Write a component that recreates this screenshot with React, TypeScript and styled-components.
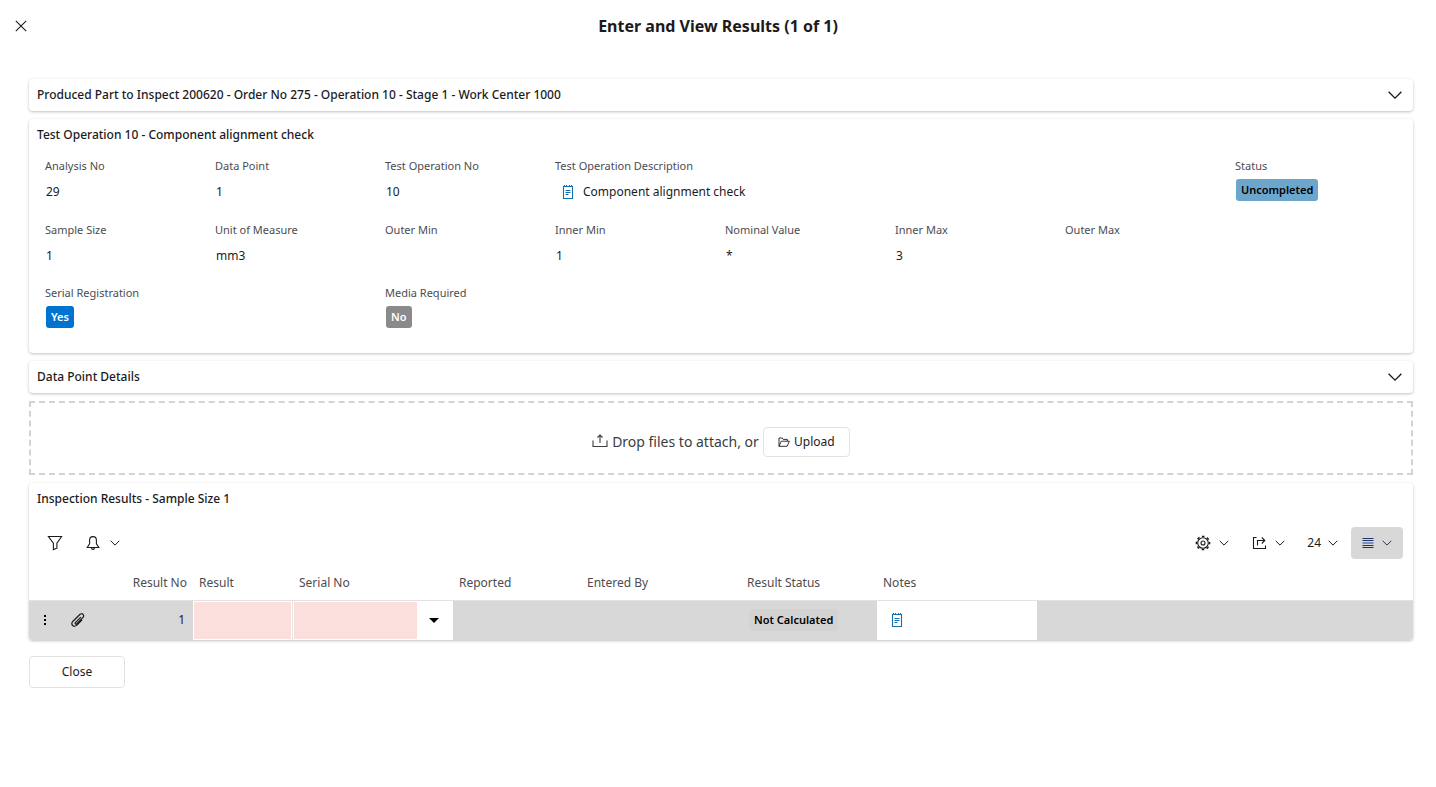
import React from 'react';
import styled, { createGlobalStyle } from 'styled-components';

const GlobalStyle = createGlobalStyle`
  *, *::before, *::after { box-sizing: border-box; }
  body {
    margin: 0;
    background: #fff;
    color: #1b1b1d;
    font-family: "Noto Sans", "Open Sans", sans-serif;
    font-size: 12px;
    line-height: 16px;
  }
  button, input { font: inherit; color: inherit; }
`;

/* ---------- icons ---------- */

const Svg = styled.svg`
  display: block;
  flex: none;
  fill: none;
  stroke: currentColor;
`;

const CloseIcon = () => (
  <Svg width="12" height="12" viewBox="0 0 12 12" strokeWidth="1.1">
    <path d="M.8.8l10.4 10.4M11.2.8L.8 11.2" />
  </Svg>
);

const ChevronIcon = ({ large = false }: { large?: boolean }) =>
  large ? (
    <Svg width="14" height="8" viewBox="0 0 14 8" strokeWidth="1.3">
      <path d="M.6.8L7 7.1 13.4.8" />
    </Svg>
  ) : (
    <Svg width="10" height="6" viewBox="0 0 10 6" strokeWidth="1">
      <path d="M.7.8L5 5.1 9.3.8" />
    </Svg>
  );

const FilterIcon = () => (
  <Svg width="16" height="16" viewBox="0 0 16 16" strokeWidth="1.1">
    <path d="M1.4 1.5h13.2L9.9 8.2v5L6.4 14.6V8.2z" />
  </Svg>
);

const BellIcon = () => (
  <Svg width="14" height="16" viewBox="0 0 14 16" strokeWidth="1.1">
    <path d="M1.2 12.5L3.600 8.800V5.200C3.600 3 5 1.600 7 1.600S10.400 3 10.400 5.200v3.600l2.400 3.700z" />
    <path d="M5.400 12.600c.1 1.200.7 1.800 1.600 1.800s1.500-.6 1.600-1.800" />
  </Svg>
);

const GearIcon = () => (
  <Svg width="16" height="16" viewBox="0 0 16 16" strokeWidth="1.1">
    <circle cx="8" cy="8" r="5.3" />
    <circle cx="8" cy="8" r="6.6" strokeWidth="1.5" strokeDasharray="2.6 2.584" strokeDashoffset="1.3" />
    <circle cx="8" cy="8" r="2" />
  </Svg>
);

const ExportIcon = () => (
  <Svg width="16" height="14" viewBox="0 0 16 14" strokeWidth="1.1">
    <path d="M5.500 1.500h-3v11h12V9.500" />
    <path d="M6.500 9.500v-5h7.200M10.800 1.500l3 3-3 3" />
  </Svg>
);

const ListIcon = () => (
  <Svg width="12" height="12" viewBox="0 0 12 12" strokeWidth="1">
    <path d="M.5 1.500h11M.5 3.500h11M.5 8.500h11M.5 10.500h11" />
    <path d="M.5 6h11" strokeWidth="2" stroke="#7d8fc0" />
  </Svg>
);

const BlueSvg = styled(Svg)`
  stroke: #1470ac;
`;

const NoteIcon = () => (
  <BlueSvg width="12" height="16" viewBox="0 0 12 16" strokeWidth="1.1">
    <path d="M1.500 2.500h9v12h-9z" />
    <path d="M2.500 1v2M4.500 1v2M7.500 1v2M9.500 1v2" />
    <path d="M3.500 6.500h5M3.500 8.500h5M3.500 10.500h3" />
  </BlueSvg>
);

const UploadIcon = () => (
  <Svg width="16" height="16" viewBox="0 0 16 16" strokeWidth="1.1">
    <path d="M1 6.500v6h14v-6M8 9V1M5.500 3.500L8 1l2.500 2.500" />
  </Svg>
);

const FolderIcon = () => (
  <Svg width="12" height="12" viewBox="0 0 12 12" strokeWidth=".9">
    <path d="M1 10.300V2h3.300l1 1.400h4v1.800M1 10.300l2.300-5.100h8.100l-2.300 5.100z" />
  </Svg>
);

const ClipIcon = () => (
  <Svg width="16" height="16" viewBox="0 0 16 16" strokeWidth="1.2">
    <path d="M10.800 5.100L5.400 10.600c-.5.5-.4 1 0 1.300s.9.300 1.300-.1l6.200-6.300c1-1.100.9-2.400.1-3.200s-2.200-.8-3.200.2L3 9.200c-1.300 1.400-1.400 3.200-.3 4.300s2.900 1 4.200-.3l5.200-5.300" />
  </Svg>
);

const DotsIcon = () => (
  <Svg width="4" height="12" viewBox="0 0 4 12">
    <path d="M1 2h2M1 6h2M1 10h2" strokeWidth="2" stroke="#000" />
  </Svg>
);

const CaretIcon = () => (
  <Svg width="10" height="5" viewBox="0 0 10 5" strokeWidth="0">
    <path d="M0 0h10L5 5z" fill="#000" />
  </Svg>
);

/* ---------- page parts ---------- */

const Header = styled.header`
  display: grid;
  grid-template-columns: 42px 1fr 42px;
  align-items: center;
  height: 52px;
`;

const Title = styled.h1`
  margin: 0;
  text-align: center;
  font-size: 16px;
  line-height: 24px;
  font-weight: 700;
`;

const IconButton = styled.button`
  display: flex;
  align-items: center;
  justify-content: center;
  gap: 8px;
  padding: 0;
  border: 0;
  background: none;
  cursor: pointer;
`;

const CloseX = styled(IconButton)`
  height: 32px;
`;

const Main = styled.main`
  display: flex;
  flex-direction: column;
  gap: 8px;
  padding: 27px 23px 24px 29px;
`;

const Card = styled.section`
  border-radius: 4px;
  background: #fff;
  box-shadow: 0 1px 3px rgba(0, 0, 0, 0.25);
  overflow: hidden;
`;

const CardTitle = styled.h2`
  margin: 0;
  padding: 8px;
  font-size: 12px;
  line-height: 16px;
  font-weight: 500;
`;

const Expander = styled.button`
  display: flex;
  align-items: center;
  justify-content: space-between;
  width: 100%;
  height: 32px;
  padding: 0 11px 0 8px;
  border: 0;
  background: none;
  font-weight: 500;
  cursor: pointer;
`;

const Fields = styled.dl`
  display: grid;
  grid-template-columns: repeat(8, minmax(0, 1fr));
  grid-template-rows: 48px 47px 48px;
  row-gap: 16px;
  margin: 0;
  padding: 7px 8px 20px 16px;
`;

const Field = styled.div<{ $col: number; $span?: number }>`
  grid-column: ${(p) => p.$col} / span ${(p) => p.$span ?? 1};
`;

const Label = styled.dt`
  color: #4c4c50;
  font-size: 11px;
  line-height: 16px;
`;

const Value = styled.dd`
  display: flex;
  align-items: center;
  gap: 9px;
  height: 32px;
  margin: 0;
  padding: 4px 0 0 1px;
`;

const NoteValue = styled(Value)`
  padding-left: 7px;
`;

const BadgeValue = styled(Value)`
  padding-top: 0;
`;

const Badge = styled.span<{ $bg: string; $fg: string }>`
  padding: 3px 5px;
  border-radius: 3px;
  background: ${(p) => p.$bg};
  color: ${(p) => p.$fg};
  font-size: 11px;
  line-height: 16px;
  font-weight: 600;
`;

const DropZone = styled.section`
  display: flex;
  align-items: center;
  justify-content: center;
  gap: 4px;
  height: 74px;
  padding-top: 7px;
  border: 2px dashed #d3d3d3;
  color: #3c3c40;
  font-size: 14px;
  line-height: 20px;
`;

const OutlineButton = styled.button<{ $wide?: boolean }>`
  display: flex;
  align-items: center;
  justify-content: center;
  gap: 4px;
  width: ${(p) => (p.$wide ? '96px' : '87px')};
  height: ${(p) => (p.$wide ? '32px' : '30px')};
  padding: 0;
  border: 1px solid #e2e2e2;
  border-radius: 4px;
  background: #fff;
  color: #1b1b1d;
  font-size: 12px;
  line-height: 16px;
  cursor: pointer;
`;

const Toolbar = styled.div`
  display: flex;
  align-items: center;
  gap: 23px;
  height: 32px;
  margin-top: 12px;
  padding: 0 10px 0 18px;
`;

const ToolGroup = styled.div`
  display: flex;
  align-items: center;
  gap: 22px;
  margin-left: auto;
`;

const ToolButton = styled(IconButton)<{ $gap?: number }>`
  height: 32px;
  gap: ${(p) => p.$gap ?? 8}px;
`;

const ActiveTool = styled(ToolButton)`
  width: 52px;
  margin-left: -9px;
  border-radius: 4px;
  background: #d8d8d8;
  color: #1f3864;
`;

const Table = styled.table`
  width: 100%;
  margin-top: 6px;
  border-collapse: collapse;
  table-layout: fixed;
`;

const Th = styled.th<{ $right?: boolean }>`
  height: 35px;
  padding: 2px 6px 0;
  border-bottom: 1px solid #e2e2e2;
  color: #4c4c50;
  font-weight: 400;
  white-space: nowrap;
  text-align: ${(p) => (p.$right ? 'right' : 'left')};
`;

const Td = styled.td<{ $white?: boolean }>`
  height: 39px;
  padding: 0;
  background: ${(p) => (p.$white ? '#fff' : '#d8d8d8')};
`;

const NumberTd = styled(Td)`
  padding-right: 8px;
  text-align: right;
`;

const Centered = styled.div`
  display: flex;
  justify-content: center;
`;

const EditCell = styled.div<{ $last?: boolean }>`
  display: flex;
  height: 39px;
  padding: 1px;
  border-right: 1px solid ${(p) => (p.$last ? '#fff' : '#e6e6e6')};
`;

const RequiredInput = styled.input`
  flex: 1;
  min-width: 0;
  padding: 0 6px;
  border: 0;
  background: #fbdfdc;
`;

const CaretButton = styled(IconButton)`
  width: 34px;
`;

const StatusWrap = styled.div`
  display: flex;
  padding-left: 8px;
`;

const NoteWrap = styled.div`
  padding-left: 14px;
`;

const NoteButton = styled(IconButton)`
  height: 24px;
`;

const Actions = styled.footer`
  display: flex;
  margin-top: 8px;
`;

type FieldData = { label: string; value?: string; col: number };

const limits: FieldData[] = [
  { label: 'Sample Size', value: '1', col: 1 },
  { label: 'Unit of Measure', value: 'mm3', col: 2 },
  { label: 'Outer Min', col: 3 },
  { label: 'Inner Min', value: '1', col: 4 },
  { label: 'Nominal Value', value: '*', col: 5 },
  { label: 'Inner Max', value: '3', col: 6 },
  { label: 'Outer Max', col: 7 },
];

const identity: FieldData[] = [
  { label: 'Analysis No', value: '29', col: 1 },
  { label: 'Data Point', value: '1', col: 2 },
  { label: 'Test Operation No', value: '10', col: 3 },
];

const columnWidths = [32, 34, 98, 100, 160, 128, 160, 136, 160];

const TextField = ({ label, value, col }: FieldData) => (
  <Field $col={col}>
    <Label>{label}</Label>
    <Value>{value}</Value>
  </Field>
);

export default function App() {
  return (
    <>
      <GlobalStyle />
      <Header>
        <CloseX type="button" aria-label="Close dialog">
          <CloseIcon />
        </CloseX>
        <Title>Enter and View Results (1 of 1)</Title>
      </Header>
      <Main>
        <Card>
          <Expander type="button" aria-expanded="false">
            Produced Part to Inspect 200620 - Order No 275 - Operation 10 - Stage 1 - Work Center 1000
            <ChevronIcon large />
          </Expander>
        </Card>

        <Card>
          <CardTitle>Test Operation 10 - Component alignment check</CardTitle>
          <Fields>
            {identity.map((f) => (
              <TextField key={f.label} {...f} />
            ))}
            <Field $col={4} $span={4}>
              <Label>Test Operation Description</Label>
              <NoteValue>
                <NoteIcon />
                Component alignment check
              </NoteValue>
            </Field>
            <Field $col={8}>
              <Label>Status</Label>
              <BadgeValue>
                <Badge $bg="#6ca6cd" $fg="#000">Uncompleted</Badge>
              </BadgeValue>
            </Field>
            {limits.map((f) => (
              <TextField key={f.label} {...f} />
            ))}
            <Field $col={1} $span={2}>
              <Label>Serial Registration</Label>
              <BadgeValue>
                <Badge $bg="#0073d1" $fg="#fff">Yes</Badge>
              </BadgeValue>
            </Field>
            <Field $col={3}>
              <Label>Media Required</Label>
              <BadgeValue>
                <Badge $bg="#8a8a8a" $fg="#fff">No</Badge>
              </BadgeValue>
            </Field>
          </Fields>
        </Card>

        <Card>
          <Expander type="button" aria-expanded="false">
            Data Point Details
            <ChevronIcon large />
          </Expander>
        </Card>

        <DropZone>
          <UploadIcon />
          <span>Drop files to attach, or</span>
          <OutlineButton type="button">
            <FolderIcon />
            Upload
          </OutlineButton>
        </DropZone>

        <Card>
          <CardTitle>Inspection Results - Sample Size 1</CardTitle>
          <Toolbar>
            <ToolButton type="button" aria-label="Filter">
              <FilterIcon />
            </ToolButton>
            <ToolButton type="button" aria-label="Notifications" $gap={10}>
              <BellIcon />
              <ChevronIcon />
            </ToolButton>
            <ToolGroup>
              <ToolButton type="button" aria-label="Settings">
                <GearIcon />
                <ChevronIcon />
              </ToolButton>
              <ToolButton type="button" aria-label="Export">
                <ExportIcon />
                <ChevronIcon />
              </ToolButton>
              <ToolButton type="button" $gap={7}>
                24
                <ChevronIcon />
              </ToolButton>
              <ActiveTool type="button" aria-label="List view">
                <ListIcon />
                <ChevronIcon />
              </ActiveTool>
            </ToolGroup>
          </Toolbar>
          <Table>
            <colgroup>
              {columnWidths.map((w, i) => (
                <col key={i} width={w} />
              ))}
              <col />
            </colgroup>
            <thead>
              <tr>
                <Th />
                <Th />
                <Th $right>Result No</Th>
                <Th>Result</Th>
                <Th>Serial No</Th>
                <Th>Reported</Th>
                <Th>Entered By</Th>
                <Th>Result Status</Th>
                <Th>Notes</Th>
                <Th />
              </tr>
            </thead>
            <tbody>
              <tr>
                <Td>
                  <Centered>
                    <IconButton type="button" aria-label="Row actions">
                      <DotsIcon />
                    </IconButton>
                  </Centered>
                </Td>
                <Td>
                  <Centered>
                    <IconButton type="button" aria-label="Attachments">
                      <ClipIcon />
                    </IconButton>
                  </Centered>
                </Td>
                <NumberTd>1</NumberTd>
                <Td $white>
                  <EditCell>
                    <RequiredInput aria-label="Result" />
                  </EditCell>
                </Td>
                <Td $white>
                  <EditCell $last>
                    <RequiredInput aria-label="Serial No" />
                    <CaretButton type="button" aria-label="Choose serial number">
                      <CaretIcon />
                    </CaretButton>
                  </EditCell>
                </Td>
                <Td />
                <Td />
                <Td>
                  <StatusWrap>
                    <Badge $bg="#d3d3d3" $fg="#000">Not Calculated</Badge>
                  </StatusWrap>
                </Td>
                <Td $white>
                  <NoteWrap>
                    <NoteButton type="button" aria-label="Notes">
                      <NoteIcon />
                    </NoteButton>
                  </NoteWrap>
                </Td>
                <Td />
              </tr>
            </tbody>
          </Table>
        </Card>

        <Actions>
          <OutlineButton type="button" $wide>
            Close
          </OutlineButton>
        </Actions>
      </Main>
    </>
  );
}
